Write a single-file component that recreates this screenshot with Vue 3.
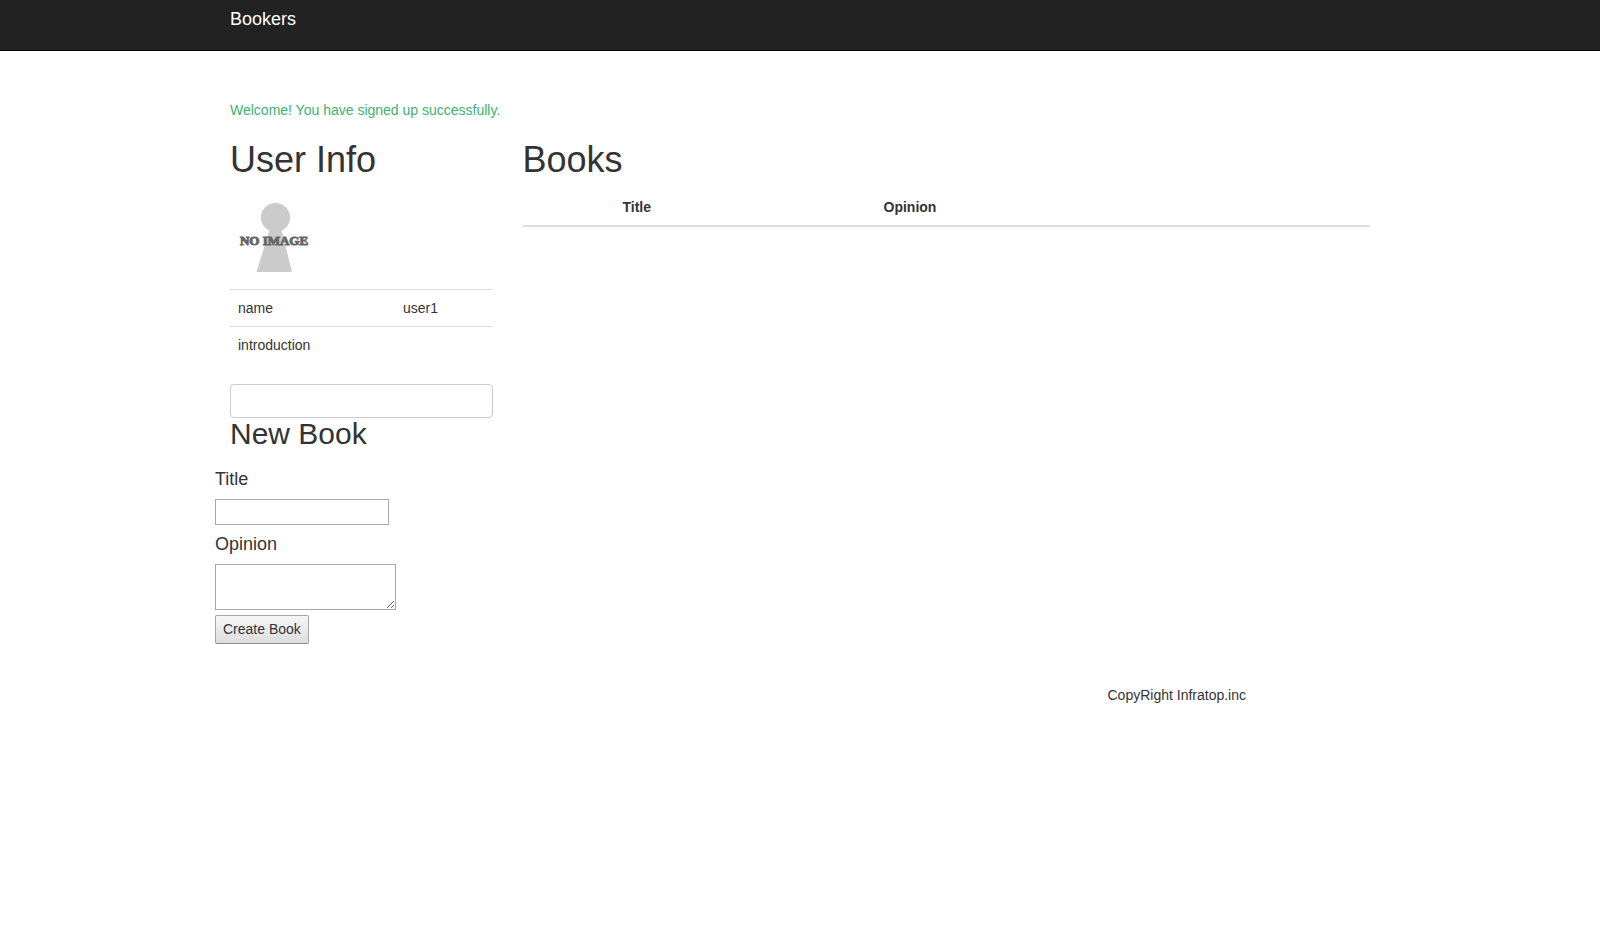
<script setup>
import { ref } from 'vue'

const user = ref({ name: 'user1', introduction: '' })
const title = ref('')
const opinion = ref('')
</script>

<template>
  <div class="page">
    <header class="navbar">
      <div class="container">
        <a class="brand" href="#">Bookers</a>
      </div>
    </header>

    <div class="container">
      <p class="notice">Welcome! You have signed up successfully.</p>

      <main class="row">
        <aside class="side">
          <div class="pad">
            <h1>User Info</h1>
            <svg class="avatar" viewBox="0 0 100 100" role="img" aria-label="No image">
              <circle cx="45.5" cy="28.5" r="14.6" fill="#cbcbcb" />
              <path d="M39.5 41H51.5L62 83H26.5Z" fill="#cbcbcb" />
              <text x="44" y="56" text-anchor="middle">NO IMAGE</text>
            </svg>
            <table class="info">
              <tbody>
                <tr>
                  <td class="key">name</td>
                  <td>{{ user.name }}</td>
                </tr>
                <tr>
                  <td class="key">introduction</td>
                  <td>{{ user.introduction }}</td>
                </tr>
              </tbody>
            </table>
            <a class="edit" href="#" aria-label="Edit user"></a>
            <h2>New Book</h2>
          </div>
          <form class="book-form" @submit.prevent>
            <label for="book-title">Title</label>
            <input id="book-title" v-model="title" type="text" />
            <label for="book-opinion">Opinion</label>
            <textarea id="book-opinion" v-model="opinion"></textarea>
            <button type="submit">Create Book</button>
          </form>
        </aside>

        <section class="books">
          <h1>Books</h1>
          <table class="list">
            <thead>
              <tr>
                <th class="thumb"></th>
                <th class="name">Title</th>
                <th>Opinion</th>
              </tr>
            </thead>
          </table>
        </section>
      </main>

      <footer class="footer">CopyRight Infratop.inc</footer>
    </div>
  </div>
</template>

<style>
body {
  margin: 0;
  background: #fff;
}
</style>

<style scoped>
.page,
.page * {
  box-sizing: border-box;
}
.page {
  font-family: "Liberation Sans", Arial, sans-serif;
  font-size: 14px;
  line-height: 20px;
  color: #333;
}
.navbar {
  min-height: 51px;
  background: #222;
  border-bottom: 1px solid #080808;
}
.container {
  max-width: 1170px;
  margin: 0 auto;
}
.brand {
  display: inline-block;
  padding: 9px 15px;
  font-size: 18px;
  color: #fff;
  text-decoration: none;
}
.notice {
  margin: 0;
  padding: 49px 15px 20px;
  color: #3cb371;
}
.row {
  display: grid;
  grid-template-columns: 1fr 3fr;
}
.pad,
.books {
  padding: 0 15px;
}
h1 {
  margin: 0 0 10px;
  font-size: 36px;
  line-height: 39px;
  font-weight: 400;
}
h2 {
  margin: 0 0 20px;
  font-size: 30px;
  line-height: 32px;
  font-weight: 400;
}
.avatar {
  display: block;
  width: 100px;
  height: 100px;
}
.avatar text {
  font-family: "Liberation Serif", serif;
  font-size: 13px;
  font-weight: 700;
  fill: #666;
  stroke: #666;
  stroke-width: 1px;
}
table {
  width: 100%;
  border-collapse: collapse;
  table-layout: fixed;
}
td,
th {
  padding: 8px;
  text-align: left;
}
.info {
  margin-bottom: 21px;
}
.info td {
  border-top: 1px solid #ddd;
}
.key {
  width: 165px;
}
.list th {
  border-bottom: 2px solid #ddd;
}
.thumb {
  width: 92px;
}
.name {
  width: 261px;
}
.edit {
  display: block;
  height: 34px;
  border: 1px solid #ccc;
  border-radius: 4px;
}
.book-form {
  display: flex;
  flex-direction: column;
  align-items: flex-start;
}
label {
  font-size: 18px;
  line-height: 19px;
  margin-bottom: 10px;
}
input,
textarea,
button {
  margin: 0;
  font: inherit;
  color: inherit;
}
input,
textarea {
  border: 1px solid #a6a6a6;
  border-radius: 0;
  background: #fff;
}
input {
  width: 174px;
  height: 26px;
  margin-bottom: 10px;
}
textarea {
  width: 181px;
  height: 46px;
  margin-bottom: 5px;
}
button {
  padding: 3px 7px 4px;
  border: 1px solid #a6a6a6;
  border-bottom-color: #8c8c8c;
  border-radius: 2px;
  background: linear-gradient(#f6f6f6, #ddd);
}
.footer {
  margin: 41px 0 0 75%;
  padding: 0 15px;
}
</style>
